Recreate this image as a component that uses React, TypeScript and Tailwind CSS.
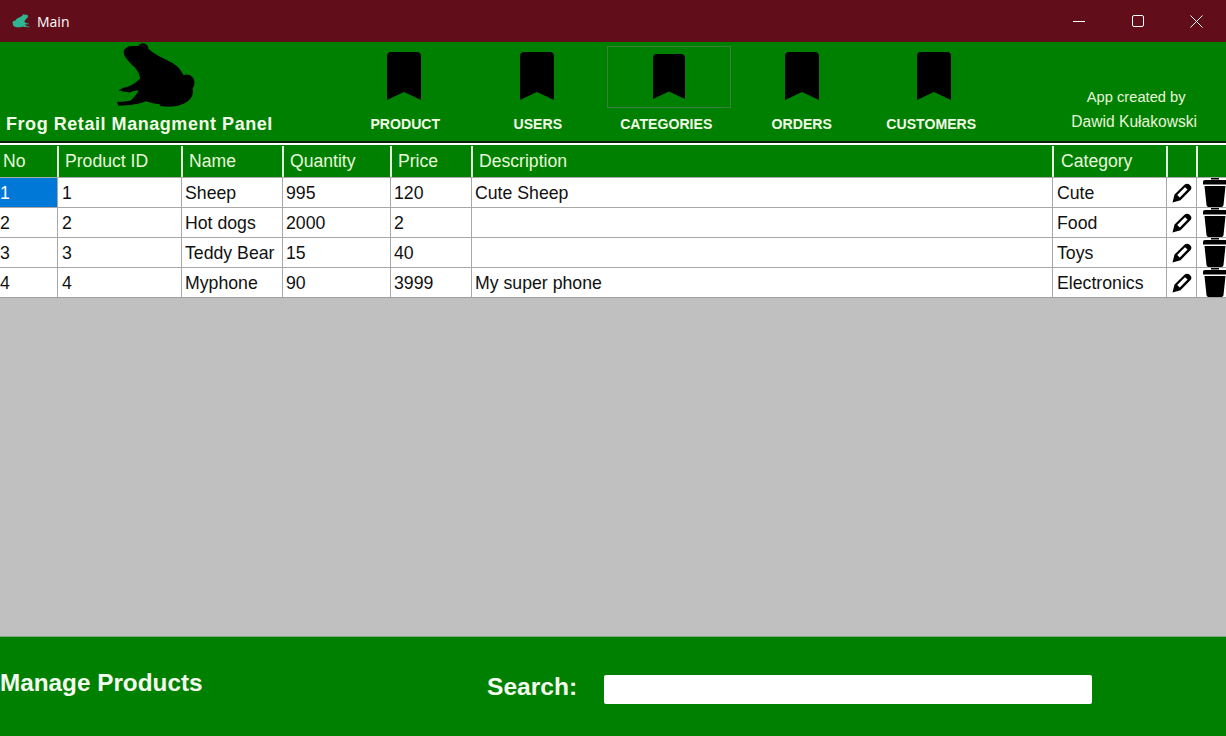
const headCols = "grid-cols-[59px_124px_101px_108px_81px_581px_114px_30px_28px]";
const rowCols = "grid-cols-[58px_124px_101px_108px_81px_581px_114px_30px_29px]";

const headers = ["No", "Product ID", "Name", "Quantity", "Price", "Description", "Category", "", ""];

const rows = [
  ["1", "1", "Sheep", "995", "120", "Cute Sheep", "Cute"],
  ["2", "2", "Hot dogs", "2000", "2", "", "Food"],
  ["3", "3", "Teddy Bear", "15", "40", "", "Toys"],
  ["4", "4", "Myphone", "90", "3999", "My super phone", "Electronics"],
];

const navItems = [
  { label: "PRODUCT", textClass: "pl-[2px]" },
  { label: "USERS", textClass: "pl-[2px]" },
  { label: "CATEGORIES", textClass: "pr-[6px]", active: true },
  { label: "ORDERS", textClass: "" },
  { label: "CUSTOMERS", textClass: "pr-[6px]" },
];

const Frog = ({ className }: { className: string }) => (
  <svg className={className} viewBox="30 6 245 200" fill="currentColor" preserveAspectRatio="none">
    <path d="M57 30 C62 22 72 17 85 18 L100 18 C103 11 112 8 120 11 C127 14 130 21 131 28 C142 36 152 44 163 49 C178 56 192 62 204 70 C216 77 226 88 235 105 C245 101 256 104 263 113 C270 123 268 136 262 145 C264 155 263 165 256 175 C246 187 232 194 215 197 C198 200 180 200 165 197 L163 192 C150 190 135 188 122 183 C112 187 100 191 88 192 C72 195 55 196 40 196 L36 184 C50 185 66 184 78 180 C88 170 97 160 101 150 C92 150 82 153 74 157 C62 155 50 153 41 150 C50 144 62 140 72 138 C84 134 96 124 105 115 C104 104 98 92 90 83 C78 72 66 60 59 48 C56 42 55 36 57 30 Z" />
  </svg>
);

const Bookmark = ({ small }: { small?: boolean }) => (
  <svg className={small ? "mb-[1px] h-[46px] w-[32px]" : "mb-[2px] h-[49px] w-[34px]"} viewBox="0 0 34 49" fill="currentColor" preserveAspectRatio="none">
    <path d="M0 4 C0 1.500 1.500 0 4 0 H30 C32.500 0 34 1.500 34 4 V48 L17 40 L0 48 Z" />
  </svg>
);

const Pencil = () => (
  <svg className="h-[20px] w-[20px]" viewBox="0 0 20 20" fill="currentColor" fillRule="evenodd">
    <path d="M0.500 19.500 L2.500 11.500 L12.500 1.800 C14 0.300 15.800 0.300 17.300 1.500 L18.500 2.700 C19.800 4 19.700 5.800 18.300 7.200 L8.500 17.200 Z M5.200 12 L7.800 14.400 L15.600 6.600 L13 4.200 Z" />
  </svg>
);

const Trash = () => (
  <svg className="h-[29px] w-[24px] shrink-0" viewBox="0 0 24 29" fill="currentColor">
    <path d="M8 0 H16 V1.500 H8 Z" />
    <path d="M2 2 H22 C23.200 2 24 2.800 24 4 V6.500 H0 V4 C0 2.800 0.800 2 2 2 Z" />
    <path d="M1.500 8 H22.500 L20.500 27 C20.300 28.300 19.500 29 18.500 29 H5.500 C4.500 29 3.700 28.300 3.500 27 Z" />
  </svg>
);

export default function App() {
  return (
    <div className="flex h-[736px] w-[1226px] flex-col overflow-hidden bg-[#c0c0c0] font-['Liberation_Sans',Arial,sans-serif]">
      {/* title bar */}
      <div className="flex h-[42px] shrink-0 items-center bg-[#620e1a] pl-[12px] text-white">
        <Frog className="h-[14px] w-[18px] -scale-x-100 text-[#2eb591]" />
        <span className="ml-[7px] font-['Open_Sans',sans-serif] text-[14px]">Main</span>
        <div className="ml-auto flex h-full items-center">
          <div className="flex w-[59px] justify-center">
            <div className="h-px w-[12px] bg-white" />
          </div>
          <div className="flex w-[59px] justify-center">
            <div className="h-[12px] w-[12px] rounded-[2px] border border-white" />
          </div>
          <div className="flex w-[59px] justify-center">
            <svg className="h-[13px] w-[13px]" viewBox="0 0 13 13" stroke="currentColor" strokeWidth="1">
              <path d="M0.500 0.500 L12.500 12.500 M12.500 0.500 L0.500 12.500" />
            </svg>
          </div>
        </div>
      </div>

      {/* header band */}
      <div className="flex h-[99px] shrink-0 bg-[#008000] text-[#f2fbe8]">
        <div className="flex w-[338px] shrink-0 flex-col">
          <Frog className="ml-[115px] h-[67px] w-[82px] shrink-0 text-black" />
          <div className="ml-[6px] mt-[5px] whitespace-nowrap text-[18px] font-bold leading-[20px] tracking-[0.55px]">
            Frog Retail Managment Panel
          </div>
        </div>
        <div className="flex">
          {navItems.map((item) => (
            <div key={item.label} className="flex w-[132.500px] flex-col items-center">
              <div
                className={`mt-[4px] flex h-[62px] w-[124px] items-center justify-center border text-black ${
                  item.active ? "border-[#3d7f3d]" : "border-transparent"
                }`}
              >
                <Bookmark small={item.active} />
              </div>
              <div className={`mt-[7px] w-[132px] whitespace-nowrap text-center text-[14.100px] font-bold leading-[18px] ${item.textClass}`}>
                {item.label}
              </div>
            </div>
          ))}
        </div>
        <div className="ml-auto mr-[29px] mt-[43px] flex flex-col items-center leading-[24.500px] text-[#e8f5dc]">
          <div className="pl-[4px] text-[14.700px]">App created by</div>
          <div className="text-[15.600px]">Dawid Kułakowski</div>
        </div>
      </div>

      {/* separator */}
      <div className="h-[2px] shrink-0 bg-[#0a1f0a]" />
      <div className="h-[2px] shrink-0 bg-white" />

      {/* table */}
      <div className={`grid h-[32px] shrink-0 bg-[#008000] pt-px ${headCols}`}>
        {headers.map((h, i) => (
          <div
            key={i}
            className={`flex items-center border-r-2 border-[#e6f2e0] text-[17.600px] text-[#e8f8dc] last:border-r-0 ${
              i === 0 ? "pl-[3px]" : i === 6 ? "pl-[7px]" : "pl-[6px]"
            }`}
          >
            {h}
          </div>
        ))}
      </div>
      {rows.map((row, r) => (
        <div
          key={r}
          className={`grid shrink-0 border-t border-t-[#a8a8a8] bg-white text-[#111111] ${rowCols} ${
            r === 3 ? "h-[31px] border-b border-b-[#a0a0a0]" : "h-[30px]"
          }`}
        >
          {row.map((cell, i) => (
            <div
              key={i}
              className={`flex items-center overflow-hidden whitespace-nowrap border-r border-[#a8a8a8] pt-[2px] text-[17.700px] ${
                i === 0 ? "" : i === 1 || i === 6 ? "pl-[4px]" : "pl-[3px]"
              } ${r === 0 && i === 0 ? "bg-[#0078d7] text-white" : ""}`}
            >
              {cell}
            </div>
          ))}
          <div className="flex items-center justify-center border-r border-[#a8a8a8] text-black">
            <Pencil />
          </div>
          <div className="flex items-start overflow-hidden pl-[6px] text-black">
            <Trash />
          </div>
        </div>
      ))}

      <div className="flex-1" />

      {/* footer */}
      <div className="flex h-[100px] shrink-0 border-t border-[#7fa87f] bg-[#008000] text-[#f4fbef]">
        <div className="mt-[32px] w-[487px] whitespace-nowrap text-[24.300px] font-bold leading-[28px]">Manage Products</div>
        <div className="mt-[36px] w-[117px] text-[24.600px] font-bold leading-[28px]">Search:</div>
        <div className="mt-[38px] h-[29px] w-[488px] rounded-[2px] bg-white" />
      </div>
    </div>
  );
}
